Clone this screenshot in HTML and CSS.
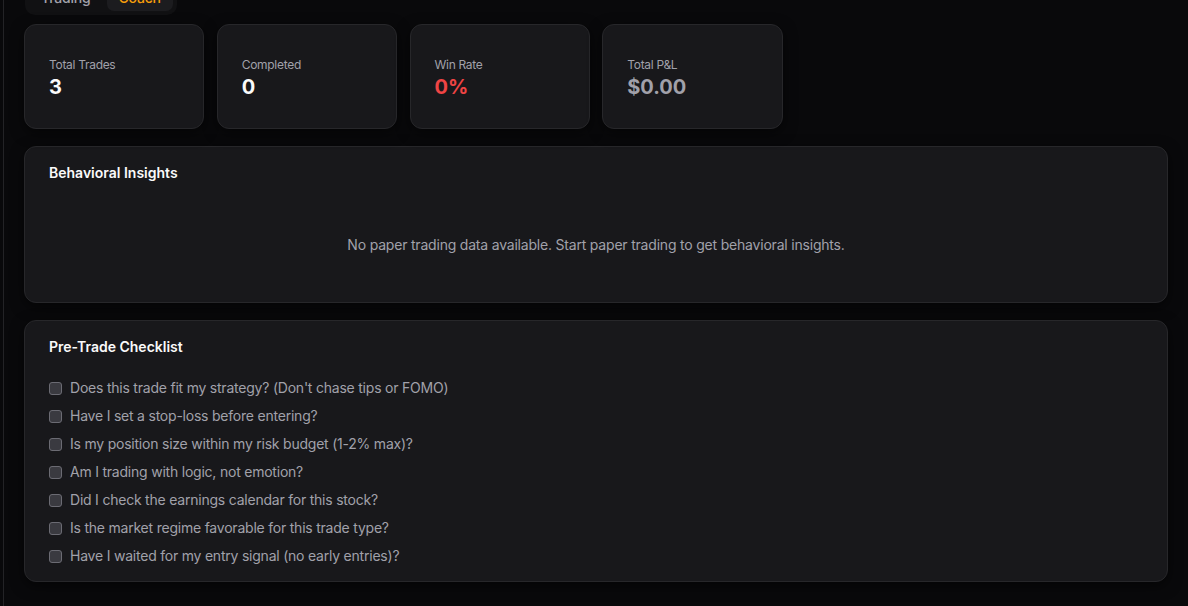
FILE: index.html
```html
<!DOCTYPE html>
<html lang="en">
<head>
<meta charset="utf-8">
<title>Coach</title>
<link rel="stylesheet" href="styles.css">
</head>
<body>
<div class="app">
  <div class="rail"></div>
  <main class="main">
    <div class="tabs">
      <button class="tab">Trading</button>
      <button class="tab active">Coach</button>
    </div>
    <section class="stats">
      <div class="card stat">
        <div class="stat-label">Total Trades</div>
        <div class="stat-value">3</div>
      </div>
      <div class="card stat">
        <div class="stat-label">Completed</div>
        <div class="stat-value">0</div>
      </div>
      <div class="card stat">
        <div class="stat-label">Win Rate</div>
        <div class="stat-value red">0%</div>
      </div>
      <div class="card stat">
        <div class="stat-label">Total P&amp;L</div>
        <div class="stat-value muted">$0.00</div>
      </div>
    </section>
    <section class="card panel">
      <h2 class="panel-title">Behavioral Insights</h2>
      <p class="empty">No paper trading data available. Start paper trading to get behavioral insights.</p>
    </section>
    <section class="card panel">
      <h2 class="panel-title">Pre-Trade Checklist</h2>
      <ul class="checklist">
        <li><span class="box"></span>Does this trade fit my strategy? (Don't chase tips or FOMO)</li>
        <li><span class="box"></span>Have I set a stop-loss before entering?</li>
        <li><span class="box"></span>Is my position size within my risk budget (1-2% max)?</li>
        <li><span class="box"></span>Am I trading with logic, not emotion?</li>
        <li><span class="box"></span>Did I check the earnings calendar for this stock?</li>
        <li><span class="box"></span>Is the market regime favorable for this trade type?</li>
        <li><span class="box"></span>Have I waited for my entry signal (no early entries)?</li>
      </ul>
    </section>
  </main>
</div>
</body>
</html>
```

FILE: styles.css
```css
* { box-sizing: border-box; }
html, body {
  margin: 0;
  padding: 0;
  background: #09090b;
  height: 100%;
  overflow: hidden;
}
body {
  font-family: Inter, "Noto Sans", "Liberation Sans", sans-serif;
  color: #fafafa;
  -webkit-font-smoothing: antialiased;
}
.app {
  display: flex;
  min-height: 100%;
}
.rail {
  width: 3px;
  flex: none;
}
.main {
  flex: 1;
  border-left: 1px solid #232326;
  padding: 0 20px 0 20px;
}
.tabs {
  display: flex;
  width: fit-content;
  gap: 4px;
  margin-top: -21px;
  margin-left: 1px;
  padding: 4px;
  height: 36px;
  background: #111113;
  border-radius: 10px;
}
.tab {
  font: inherit;
  font-size: 14px;
  font-weight: 500;
  letter-spacing: -0.2px;
  color: #a1a1aa;
  background: transparent;
  border: 0;
  padding: 0 12px;
  border-radius: 7px;
  height: 28px;
}
.tab.active {
  background: #1c1c1f;
  color: #f59e0b;
}
.stats {
  display: grid;
  grid-template-columns: repeat(6, 1fr);
  gap: 12.5px;
  margin-top: 9px;
}
.card {
  background: #18181b;
  border: 1px solid #27272a;
  border-radius: 12px;
  box-shadow: 0 4px 14px rgba(0, 0, 0, 0.55);
}
.stat {
  height: 105px;
  padding: 32px 24px 0;
}
.stat-label {
  font-size: 12px;
  line-height: 16px;
  letter-spacing: -0.3px;
  color: #a1a1aa;
}
.stat-value {
  font-size: 20px;
  line-height: 28px;
  font-weight: 700;
  color: #fafafa;
}
.stat-value.red { color: #ef4444; }
.stat-value.muted { color: #a1a1aa; }
.panel {
  margin-top: 17px;
  padding: 16px 24px 15px;
}
.panel-title {
  margin: 0;
  font-size: 14px;
  line-height: 20px;
  font-weight: 600;
  color: #fafafa;
}
.empty {
  margin: 0;
  padding: 52px 0 32px;
  text-align: center;
  font-size: 14px;
  line-height: 20px;
  letter-spacing: -0.2px;
  color: #a1a1aa;
}
.checklist {
  list-style: none;
  margin: 21px 0 0;
  padding: 0;
  display: flex;
  flex-direction: column;
  gap: 8px;
}
.checklist li {
  display: flex;
  align-items: center;
  gap: 8px;
  font-size: 14px;
  line-height: 20px;
  letter-spacing: -0.22px;
  color: #a1a1aa;
}
.box {
  width: 13px;
  height: 13px;
  border: 1px solid #6b6b73;
  background: #3a3a40;
  border-radius: 3px;
  flex: none;
}
```
